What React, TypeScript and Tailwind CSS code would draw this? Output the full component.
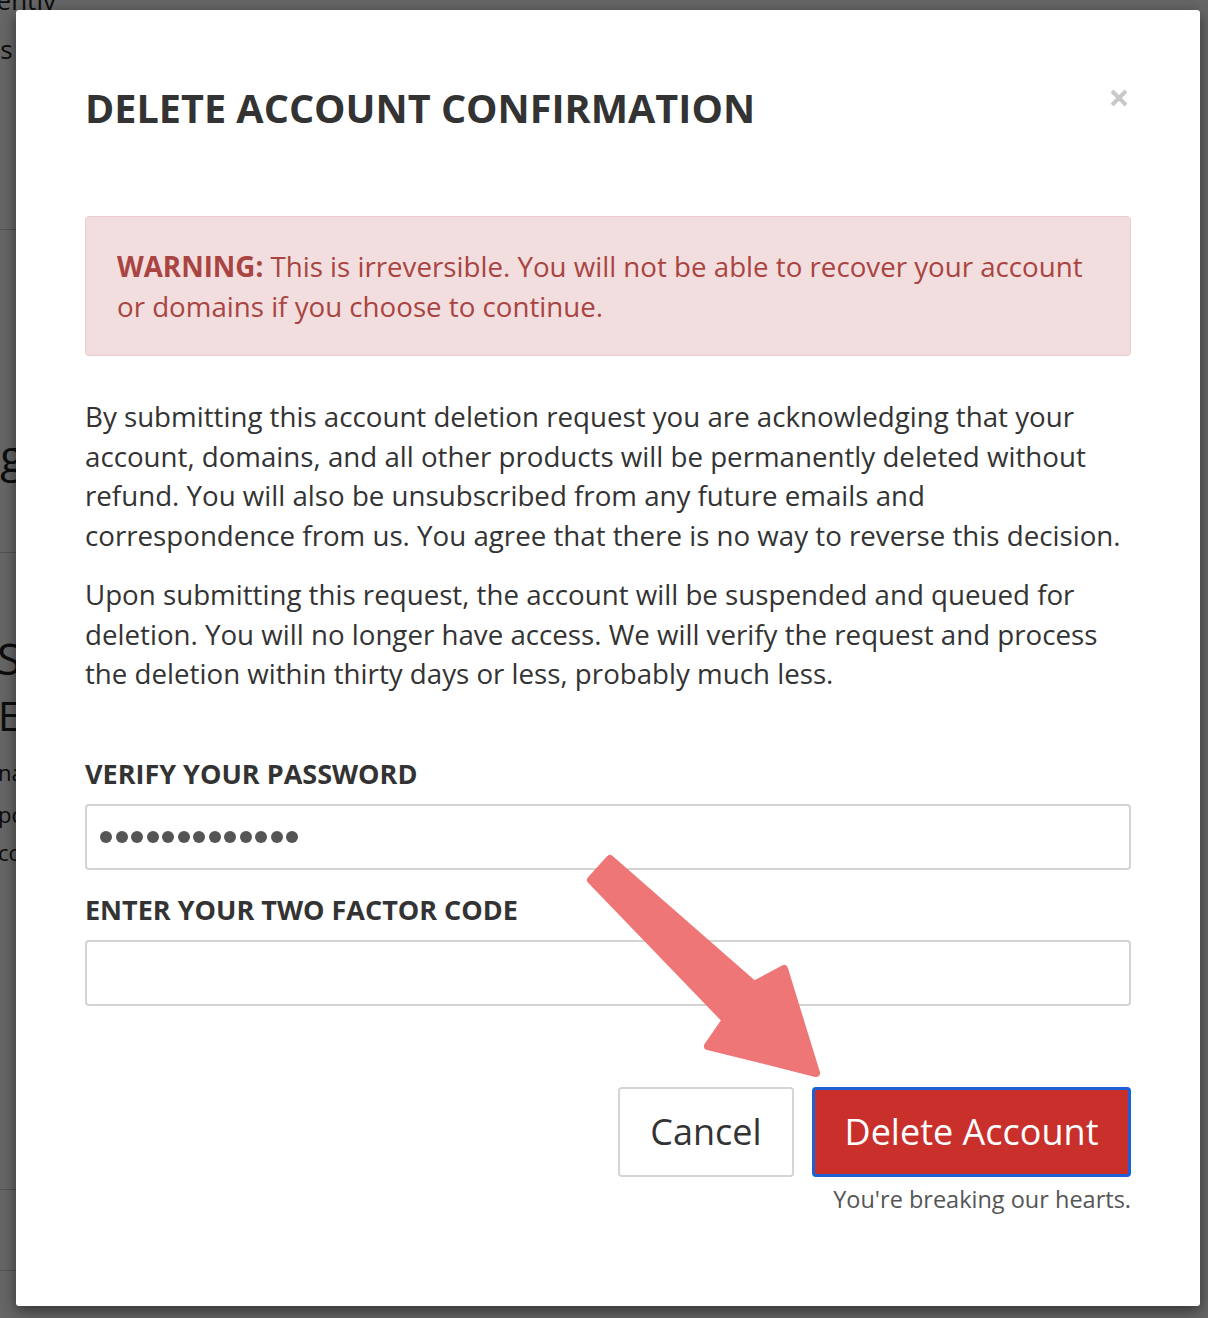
import React from "react";

const dots = Array.from({ length: 13 });

function Arrow() {
  return (
    <svg className="absolute inset-0 pointer-events-none" width="1208" height="1318" viewBox="0 0 1208 1318">
      <polygon
        points="610,859 754,985 784,969 816,1073 708,1046 726,1020 591,880"
        fill="#ef7676"
        stroke="#ef7676"
        strokeWidth="8"
        strokeLinejoin="round"
      />
    </svg>
  );
}

export default function App() {
  return (
    <div className="relative w-[1208px] h-[1318px] overflow-hidden bg-white font-['Open_Sans',sans-serif] text-[#333]">
      {/* page behind the modal */}
      <div className="flex flex-col text-[#222]">
        <div className="ml-[-57px] -mt-[14px] text-[26px] leading-[28px]">Currentiv</div>
        <div className="ml-[-52px] mt-[16px] text-[26px]">Tools</div>
        <div className="mt-[160px] h-px w-[300px] bg-[#ccc]" />
        <div className="ml-[-118px] mt-[200px] text-[44px] leading-[50px]">Settings</div>
        <div className="mt-[72px] h-px w-[300px] bg-[#ccc]" />
        <div className="ml-[-3px] mt-[80px] text-[44px] leading-[50px]">Services</div>
        <div className="ml-[-2px] mt-[8px] text-[40px] leading-[50px]">Email</div>
        <div className="ml-[-2px] mt-[10px] text-[22px] leading-[42px]">name</div>
        <div className="ml-[-2px] text-[22px] leading-[42px]">port</div>
        <div className="ml-[-2px] text-[22px] leading-[34px]">count</div>
        <div className="mt-[320px] h-px w-[300px] bg-[#ccc]" />
        <div className="mt-[80px] h-px w-[300px] bg-[#ccc]" />
      </div>

      {/* backdrop + modal */}
      <div className="absolute inset-0 bg-black/[0.6] pl-[16px] pt-[10px]">
        <div className="w-[1184px] h-[1296px] rounded-[3px] bg-white shadow-[0_5px_15px_rgba(0,0,0,0.5)] px-[69px] pt-[73px]">
          <div className="flex items-start justify-between">
            <h1 className="text-[39.6px] leading-[50px] font-bold text-[#333]">DELETE ACCOUNT CONFIRMATION</h1>
            <svg width="18" height="18" viewBox="0 0 18 18" className="mt-[6px] mr-[3px]">
              <path d="M2 2 L16 16 M16 2 L2 16" stroke="#c9c9c9" strokeWidth="4" />
            </svg>
          </div>

          <div className="mt-[83px] rounded-[4px] border border-[#ebccd1] bg-[#f2dede] px-[31px] pt-[30px] pb-[29px] text-[27.7px] leading-[39.5px] text-[#a94442]">
            <b className="font-bold">WARNING:</b> This is irreversible. You will not be able to recover your account or domains if you choose to continue.
          </div>

          <p className="mt-[41px] text-[27.7px] leading-[39.5px]">
            By submitting this account deletion request you are acknowledging that your account, domains, and all other products will be permanently deleted without refund. You will also be unsubscribed from any future emails and correspondence from us. You agree that there is no way to reverse this decision.
          </p>
          <p className="mt-[20px] text-[27.7px] leading-[39.5px]">
            Upon submitting this request, the account will be suspended and queued for deletion. You will no longer have access. We will verify the request and process the deletion within thirty days or less, probably much less.
          </p>

          <div className="mt-[60px] text-[27px] leading-[40px] font-bold text-[#333]">VERIFY YOUR PASSWORD</div>
          <div className="mt-[10px] flex h-[66px] items-center gap-[3.5px] rounded-[4px] border-2 border-[#d4d4d4] pl-[13px]">
            {dots.map((_, i) => (
              <span key={i} className="h-[12px] w-[12px] rounded-full bg-[#555]" />
            ))}
          </div>

          <div className="mt-[20px] text-[27px] leading-[40px] font-bold text-[#333]">ENTER YOUR TWO FACTOR CODE</div>
          <div className="mt-[10px] h-[66px] rounded-[4px] border-2 border-[#d4d4d4]" />

          <div className="mt-[81px] flex justify-end gap-[18px]">
            <button className="h-[90px] w-[176px] rounded-[4px] border-2 border-[#d4d4d4] bg-white text-[36px] text-[#333]">Cancel</button>
            <button className="h-[90px] w-[319px] rounded-[4px] border-[3px] border-[#1c5fd6] bg-[#c9302c] text-[36px] text-white">Delete Account</button>
          </div>
          <div className="mt-[8px] text-right text-[23.5px] leading-[28px] text-[#555]">You're breaking our hearts.</div>
        </div>
      </div>

      <Arrow />
    </div>
  );
}
